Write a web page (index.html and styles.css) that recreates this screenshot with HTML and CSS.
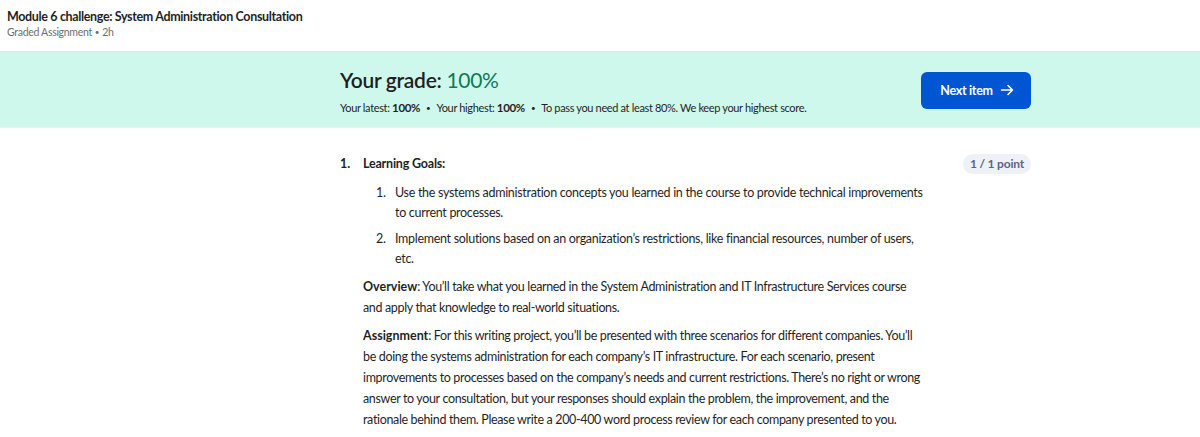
FILE: index.html
```html
<!DOCTYPE html>
<html lang="en">
<head>
<meta charset="utf-8">
<title>Module 6 challenge</title>
<link rel="stylesheet" href="styles.css">
</head>
<body>
<header class="top">
  <div class="top-title">Module 6 challenge: System Administration Consultation</div>
  <div class="top-sub">Graded Assignment<span class="sdot">•</span>2h</div>
</header>
<section class="banner">
  <div class="banner-inner">
    <div class="grade">
      <h1 class="grade-title">Your grade: <span class="grade-val">100%</span></h1>
      <div class="grade-meta">Your latest: <b>100%</b><span class="dot">•</span>Your highest: <b>100%</b><span class="dot">•</span>To pass you need at least 80%. We keep your highest score.</div>
    </div>
    <button class="next">Next item
      <svg class="arrow" width="14" height="14" viewBox="0 0 14 14" fill="none" stroke="currentColor" stroke-width="1.6" stroke-linecap="round" stroke-linejoin="round"><path d="M1.5 7h11M8 2.5 12.5 7 8 11.5"/></svg>
    </button>
  </div>
</section>
<main class="content">
  <div class="question">
    <div class="q-num">1.</div>
    <div class="q-body">
      <div class="q-head">
        <div class="q-title">Learning Goals:</div>
        <div class="points">1 / 1 point</div>
      </div>
      <ol class="goals">
        <li><span class="goal-text">Use the systems administration concepts you learned in the course to provide technical improvements to current processes.</span></li>
        <li><span class="goal-text">Implement solutions based on an organization’s restrictions, like financial resources, number of users, etc.</span></li>
      </ol>
      <p class="para"><b class="lead">Overview</b>: You’ll take what you learned in the System Administration and IT Infrastructure Services course and apply that knowledge to real-world situations.</p>
      <p class="para"><b class="lead">Assignment</b>: For this writing project, you’ll be presented with three scenarios for different companies. You’ll be doing the systems administration for each company’s IT infrastructure. For each scenario, present improvements to processes based on the company’s needs and current restrictions. There’s no right or wrong answer to your consultation, but your responses should explain the problem, the improvement, and the rationale behind them. Please write a 200-400 word process review for each company presented to you.</p>
    </div>
  </div>
</main>
</body>
</html>
```
FILE: styles.css
```css
* { box-sizing: border-box; }
body {
  margin: 0;
  font-family: Lato, "Noto Sans", sans-serif;
  color: #1f1f1f;
  background: #fff;
}
.top {
  height: 52px;
  padding: 9px 7px 0;
  border-bottom: 1px solid #e3e6e8;
}
.top-title {
  font-size: 12.5px;
  font-weight: 700;
  letter-spacing: -0.35px;
  line-height: 16px;
}
.top-sub {
  font-size: 10.5px;
  color: #6a6f73;
  letter-spacing: -0.3px;
  line-height: 15px;
}
.sdot { font-size: 8px; margin: 0 3px; vertical-align: 1px; }
.banner {
  background: #cff8ec;
  height: 76px;
  border-bottom: 1px solid #e4f5ef;
}
.banner-inner {
  margin-left: 340px;
  width: 691px;
  height: 100%;
  display: flex;
  align-items: center;
  justify-content: space-between;
}
.grade { padding-top: 4px; }
.grade-title {
  margin: 0;
  font-size: 21px;
  font-weight: 600;
  letter-spacing: -0.3px;
  line-height: 26px;
  color: #1f1f1f;
}
.grade-val { color: #0f7a55; font-weight: 400; }
.grade-meta {
  margin-top: 7px;
  font-size: 11px;
  letter-spacing: -0.35px;
  line-height: 16px;
  color: #1f1f1f;
}
.grade-meta b { font-size: 11.5px; }
.dot { display: inline-block; margin: 0 6px; font-size: 8px; vertical-align: 1px; }
.next {
  width: 110px;
  height: 37px;
  margin-top: 1px;
  border: 0;
  border-radius: 6px;
  background: #0056d2;
  color: #fff;
  font-family: inherit;
  font-size: 12.5px;
  font-weight: 700;
  letter-spacing: -0.3px;
  display: flex;
  align-items: center;
  justify-content: center;
  gap: 7px;
  padding: 0 0 0 2px;
}
.content {
  margin-left: 340px;
  width: 691px;
  padding-top: 26px;
}
.question { display: flex; }
.q-num {
  width: 23px;
  font-size: 12.5px;
  font-weight: 700;
  line-height: 20px;
}
.q-body { flex: 1; }
.q-head {
  display: flex;
  justify-content: space-between;
  align-items: center;
}
.q-title {
  font-size: 12.5px;
  font-weight: 700;
  letter-spacing: -0.2px;
  line-height: 20px;
}
.points {
  background: #eef1f6;
  color: #5b6780;
  font-size: 12px;
  font-weight: 700;
  letter-spacing: -0.2px;
  line-height: 20px;
  padding: 0 7px;
  border-radius: 10px;
}
.goals {
  list-style: none;
  counter-reset: goal;
  margin: 9px 0 0;
  padding: 0 0 0 13px;
  font-size: 12.5px;
  letter-spacing: -0.3px;
  line-height: 20px;
}
.goals li {
  counter-increment: goal;
  display: flex;
  margin-bottom: 6px;
}
.goals li::before {
  content: counter(goal) ".";
  width: 19px;
  flex: none;
}
.goal-text { width: 528px; }
.para {
  width: 560px;
  margin: 7px 0 0;
  font-size: 12.5px;
  letter-spacing: -0.35px;
  line-height: 21px;
}
.para + .para { margin-top: 7px; }
.lead { font-weight: 700; letter-spacing: 0; }
```
